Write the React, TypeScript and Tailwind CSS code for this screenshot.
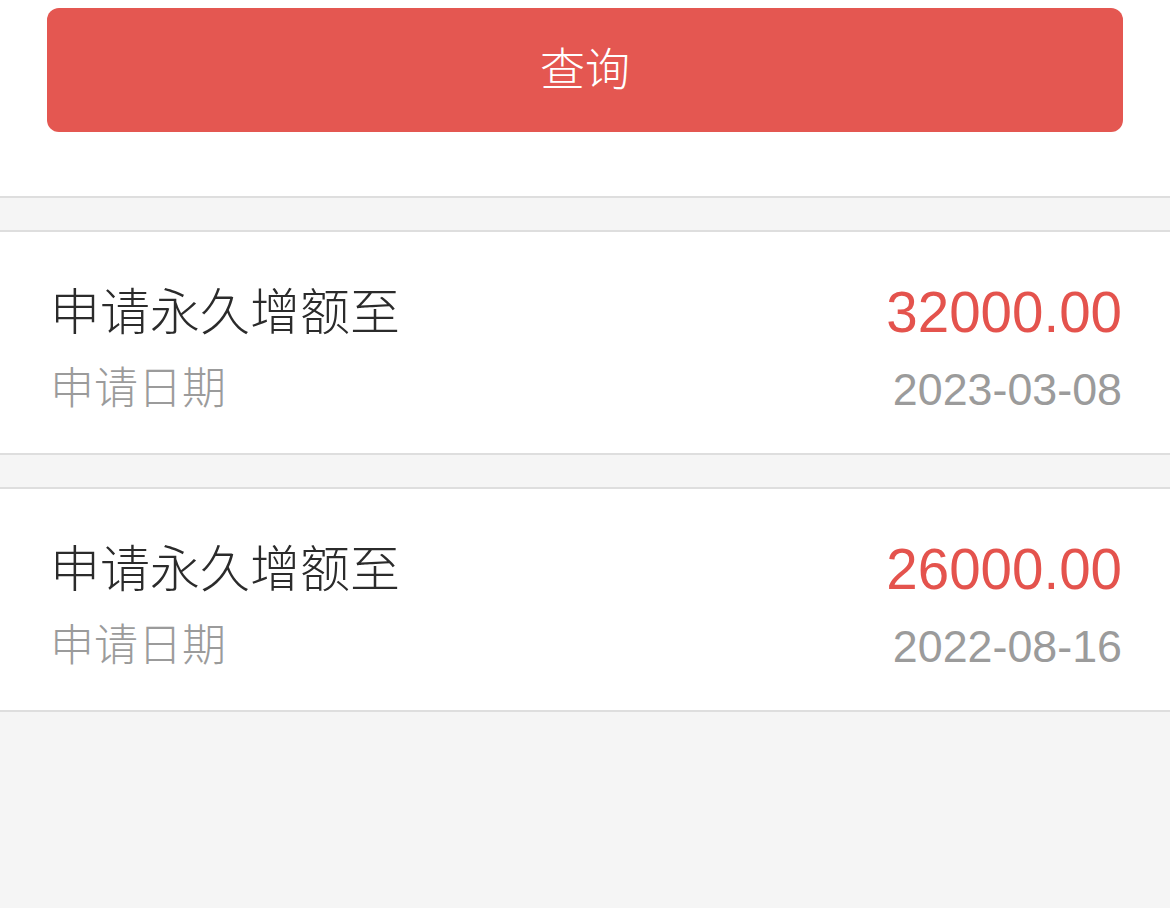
import React from 'react';

const FONT = "font-['Liberation_Sans','Noto_Sans_CJK_SC',sans-serif]";

const records = [
  { amount: '32000.00', date: '2023-03-08' },
  { amount: '26000.00', date: '2022-08-16' },
];

export default function App() {
  return (
    <div className={`min-h-screen bg-[#f5f5f5] font-light ${FONT}`}>
      {/* Query button */}
      <div className="bg-white px-[47px] pt-2 pb-[64px] border-b-2 border-[#dedede]">
        <button className="w-full h-[124px] rounded-xl bg-[#e45751] text-white text-[45px] leading-none">
          查询
        </button>
      </div>

      {/* Records */}
      {records.map((r) => (
        <div
          key={r.date}
          className="mt-[32px] bg-white border-y-2 border-[#dedede] h-[225px] pl-[50px] pr-[48px] pt-[51px] flex justify-between"
        >
          <div className="flex flex-col">
            <div className="text-[50px] leading-[60px] text-[#2b2b2b]">申请永久增额至</div>
            <div className="mt-[21px] text-[44px] leading-[50px] text-[#9b9b9b]">申请日期</div>
          </div>
          <div className="flex flex-col items-end">
            <div className="text-[56.5px] leading-[60px] text-[#e4534d]">{r.amount}</div>
            <div className="mt-[21px] text-[44.8px] leading-[50px] text-[#9b9b9b]">{r.date}</div>
          </div>
        </div>
      ))}
    </div>
  );
}
